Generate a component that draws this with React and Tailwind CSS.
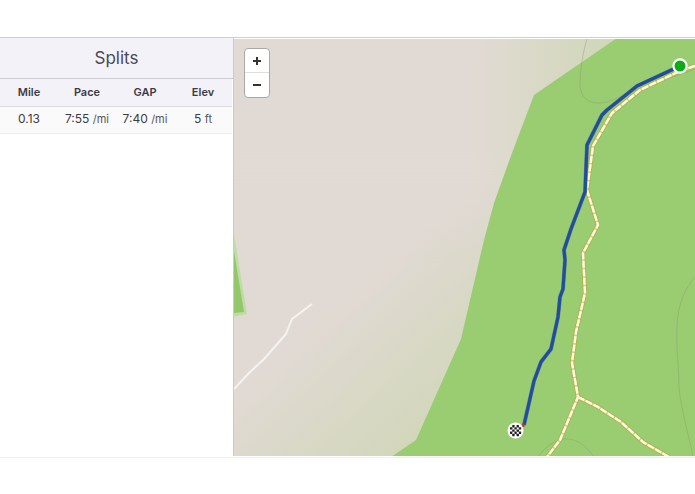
import { useState } from "react";

const splits = [{ mile: "0.13", pace: "7:55", gap: "7:40", elev: "5" }];

const columns = ["Mile", "Pace", "GAP", "Elev"];

const trails = [
  "M695 66 L680 71 L640 90 L612 113 L593 146 L587 190 L598 225 L583 253 L585 293 L576 332 L572 363 L578 397 L560 440 L547 457",
  "M578 397 L598 407 L621 422 L643 442 L669 457",
];

const contours = [
  "M587 39 C583 52 580 70 580 84 C580 97 588 103 598 103 C610 103 618 97 630 92 C650 84 672 78 695 69",
  "M695 277 C686 287 678 303 677 325 C676 350 679 370 679 388 C681 410 689 435 693 457",
  "M538 457 C554 435 576 431 594 457",
];

const route =
  "M680 66 L637 86 L607 110 L602 115 L587 145 L585 192 L571 229 L564 250 L565 260 L563 289 L560 297 L558 317 L551 349 L541 362 L534 381 L524 425";

const Unit = ({ children }) => <span className="text-[11px] text-[#55555c]">{children}</span>;

const SplitsPanel = () => (
  <section className="w-[234px] shrink-0 border-r border-[#c9c9cf]">
    <h2 className="border-b border-[#cdcdd4] bg-[#f3f2f9] py-2 text-center text-[17px] leading-6 font-normal text-[#4a4953]">
      Splits
    </h2>
    <table className="w-[232px] table-fixed border-collapse text-center text-[11px] leading-4 text-[#3c3b42]">
      <thead className="bg-[#f3f2f9]">
        <tr className="border-b border-[#dcdce3]">
          {columns.map((column) => (
            <th key={column} scope="col" className="pt-[5px] pb-1.5 font-semibold">
              {column}
            </th>
          ))}
        </tr>
      </thead>
      <tbody className="text-xs leading-4">
        {splits.map((split) => (
          <tr key={split.mile} className="border-b border-[#ededed] bg-[#fafafa]">
            <td className="pt-1 pb-1.5">{split.mile}</td>
            <td className="pt-1 pb-1.5">
              {split.pace} <Unit>/mi</Unit>
            </td>
            <td className="pt-1 pb-1.5">
              {split.gap} <Unit>/mi</Unit>
            </td>
            <td className="pt-1 pb-1.5">
              {split.elev} <Unit>ft</Unit>
            </td>
          </tr>
        ))}
      </tbody>
    </table>
  </section>
);

const MapDrawing = ({ zoom }) => {
  const width = 461 / zoom;
  const height = 417 / zoom;
  const viewBox = `${464.5 - width / 2} ${247.5 - height / 2} ${width} ${height}`;

  return (
    <svg viewBox={viewBox} className="block h-auto w-full" role="img" aria-label="Activity route">
      <defs>
        <linearGradient id="ground" gradientUnits="userSpaceOnUse" x1="325" y1="315" x2="430" y2="427">
          <stop offset="0" stopColor="#e1dad4" />
          <stop offset="0.3" stopColor="#dcd9cc" />
          <stop offset="1" stopColor="#d2d7bb" />
        </linearGradient>
        <linearGradient id="groundTop" gradientUnits="userSpaceOnUse" x1="470" y1="0" x2="600" y2="0">
          <stop offset="0" stopColor="#e1dad4" />
          <stop offset="0.3" stopColor="#dddacd" />
          <stop offset="1" stopColor="#d1d7ba" />
        </linearGradient>
        <linearGradient id="fade" gradientUnits="userSpaceOnUse" x1="0" y1="150" x2="0" y2="260">
          <stop offset="0" stopColor="#fff" />
          <stop offset="1" stopColor="#000" />
        </linearGradient>
        <mask id="topMask" maskUnits="userSpaceOnUse" x="234" y="39" width="461" height="417">
          <rect x="234" y="39" width="461" height="417" fill="url(#fade)" />
        </mask>
      </defs>

      <rect x="234" y="39" width="461" height="418" fill="url(#ground)" />
      <rect x="234" y="39" width="461" height="417" fill="url(#groundTop)" mask="url(#topMask)" />

      {/* parkland */}
      <path
        d="M617 38 L534 95 L512 153 L494 203 L484 240 L461 339 L416 440 L391 457 L696 457 L696 38 Z"
        fill="#9acc71"
      />
      <path d="M233 228 L247 314 L233 317 Z" fill="#bfdda2" />
      <path d="M233 245 L244 312 L233 313 Z" fill="#94c76b" />

      <path
        d="M233 390 L249 373 L264 359 L286 334 L292 319 L312 304"
        fill="none"
        stroke="#f5f3f0"
        strokeWidth="2"
        strokeLinejoin="round"
      />

      {contours.map((d) => (
        <path key={d} d={d} fill="none" stroke="#8a9a72" strokeOpacity="0.4" strokeWidth="1" />
      ))}

      {trails.map((d) => (
        <path key={d} d={d} fill="none" stroke="#b0b44f" strokeWidth="4.4" strokeLinejoin="round" />
      ))}
      {trails.map((d) => (
        <path key={d} d={d} fill="none" stroke="#d6d28a" strokeWidth="2.4" strokeLinejoin="round" />
      ))}
      {trails.map((d) => (
        <path key={d} d={d} fill="none" stroke="#fdfae0" strokeWidth="2.4" strokeDasharray="7 1.5" />
      ))}

      <path d={route} fill="none" stroke="#7284a0" strokeWidth="4" strokeLinejoin="round" />
      <path d={route} fill="none" stroke="#1f5096" strokeWidth="3.2" strokeLinejoin="round" />

      {/* start */}
      <circle cx="680" cy="66" r="6.6" fill="#0cac16" stroke="#fff" strokeWidth="2.2" />

      {/* finish */}
      <circle cx="523" cy="425.5" r="1.7" fill="#d3352d" />
      <circle cx="515.5" cy="430.5" r="8" fill="#fff" />
      <g fill="#222">
        {[-2, -1, 0, 1, 2].map((row) =>
          [-2, -1, 0, 1, 2]
            .filter((col) => (row + col) % 2 !== 0)
            .map((col) => (
              <rect key={`${row}:${col}`} x={514.4 + col * 2.2} y={429.4 + row * 2.2} width="2.4" height="2.4" rx="0.4" />
            ))
        )}
      </g>
    </svg>
  );
};

const ActivityMap = () => {
  const [zoom, setZoom] = useState(1);

  return (
    <section className="relative min-w-0 flex-1 pt-px">
      <MapDrawing zoom={zoom} />
      <div className="absolute top-2.5 left-2.5 flex w-[26px] flex-col overflow-hidden rounded-sm border border-[#aaa8a7] bg-white text-[#333]">
        <button
          type="button"
          aria-label="Zoom in"
          className="flex h-6 items-center justify-center border-b border-[#dedede]"
          onClick={() => setZoom((prev) => Math.min(prev * 2, 8))}
        >
          <svg viewBox="0 0 8 8" className="size-2" stroke="currentColor" strokeWidth="2">
            <path d="M0 4 H8 M4 0 V8" />
          </svg>
        </button>
        <button
          type="button"
          aria-label="Zoom out"
          className="flex h-6 items-center justify-center"
          onClick={() => setZoom((prev) => Math.max(prev / 2, 1))}
        >
          <svg viewBox="0 0 8 8" className="size-2" stroke="currentColor" strokeWidth="2">
            <path d="M0 4 H8" />
          </svg>
        </button>
      </div>
    </section>
  );
};

const App = () => {
  return (
    <main className="bg-white pt-[37px] font-['Inter',sans-serif]">
      <div className="flex border-t border-[#cfcfd1]">
        <SplitsPanel />
        <ActivityMap />
      </div>
      <div className="mt-px border-t border-[#f0f0f0]" />
    </main>
  );
};

export default App;
